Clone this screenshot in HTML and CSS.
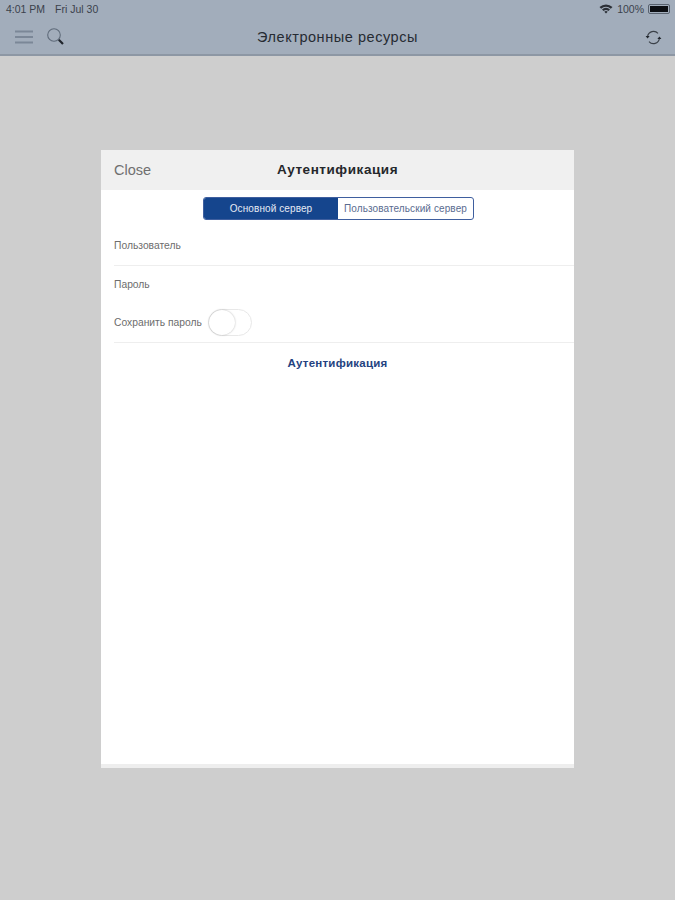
FILE: index.html
```html
<!DOCTYPE html>
<html lang="ru">
<head>
    <meta charset="UTF-8">
    <meta name="viewport" content="width=device-width, initial-scale=1.0">
    <title>Электронные ресурсы</title>
    <link rel="stylesheet" href="styles.css">
</head>
<body>
    <header class="topbar">
        <div class="status">
            <div class="status-left">
                <span>4:01 PM</span>
                <span>Fri Jul 30</span>
            </div>
            <div class="status-right">
                <svg class="wifi" width="14" height="10" viewBox="0 0 14 10">
                    <path d="M0.5 3 A9.5 9.5 0 0 1 13.5 3 L11.8 4.7 A7 7 0 0 0 2.2 4.7 Z" fill="#2b2f36"/>
                    <path d="M3 5.4 A6 6 0 0 1 11 5.4 L9.4 7 A3.8 3.8 0 0 0 4.6 7 Z" fill="#2b2f36"/>
                    <path d="M5.3 7.7 A2.6 2.6 0 0 1 8.7 7.7 L7 9.6 Z" fill="#2b2f36"/>
                </svg>
                <span>100%</span>
                <span class="battery"><span class="battery-fill"></span></span>
            </div>
        </div>
        <div class="navbar">
            <div class="nav-left">
                <svg width="20" height="16" viewBox="0 0 20 16">
                    <path d="M1 2.5H19M1 8H19M1 13.5H19" stroke="#7b8797" stroke-width="2" fill="none"/>
                </svg>
                <svg width="20" height="20" viewBox="0 0 20 20">
                    <circle cx="8" cy="8" r="6.3" stroke="#5f6b7a" stroke-width="1.1" fill="none"/>
                    <path d="M12.8 12.8L17 17" stroke="#20252c" stroke-width="2.2" fill="none"/>
                </svg>
            </div>
            <div class="nav-title">Электронные ресурсы</div>
            <svg class="refresh" width="17" height="15" viewBox="0 0 17 15">
                <path d="M2.6 6.4A6 6 0 0 1 13 3.4" stroke="#3a4048" stroke-width="1.1" fill="none"/>
                <path d="M14.4 8.6A6 6 0 0 1 4 11.6" stroke="#3a4048" stroke-width="1.1" fill="none"/>
                <path d="M0.6 6L4.6 6L2.6 8.6Z" fill="#20252c"/>
                <path d="M12.4 9L16.4 9L14.4 6.4Z" fill="#20252c"/>
            </svg>
        </div>
    </header>

    <main class="overlay">
        <section class="modal">
            <div class="modal-head">
                <span class="close">Close</span>
                <span class="modal-title">Аутентификация</span>
            </div>
            <div class="modal-body">
                <div class="segments">
                    <div class="segment active">Основной сервер</div>
                    <div class="segment">Пользовательский сервер</div>
                </div>
                <div class="field">Пользователь</div>
                <div class="field">Пароль</div>
                <div class="field save-row">
                    <span>Сохранить пароль</span>
                    <span class="switch"><span class="knob"></span></span>
                </div>
                <div class="submit">Аутентификация</div>
            </div>
            <div class="modal-foot"></div>
        </section>
    </main>
</body>
</html>
```

FILE: styles.css
```css
* {
    box-sizing: border-box;
}

body {
    margin: 0;
    height: 900px;
    overflow: hidden;
    display: flex;
    flex-direction: column;
    font-family: 'Liberation Sans', Arial, sans-serif;
    background: #cecece;
}

.topbar {
    height: 56px;
    flex-shrink: 0;
    background: #a2adbb;
    border-bottom: 2px solid #8d97a4;
}

.status {
    height: 20px;
    padding: 0 5px 2px 6px;
    display: flex;
    justify-content: space-between;
    align-items: center;
    font-size: 10.5px;
    color: #3b424c;
}

.status-left {
    display: flex;
    gap: 10px;
}

.status-right {
    display: flex;
    align-items: center;
    gap: 4px;
}

.battery {
    width: 22px;
    height: 10px;
    padding: 1px;
    border: 1px solid #59626e;
    border-radius: 2px;
    display: block;
}

.battery-fill {
    display: block;
    height: 100%;
    background: #0c0e12;
}

.navbar {
    height: 34px;
    padding: 0 13px 0 14px;
    display: flex;
    align-items: center;
    justify-content: space-between;
    position: relative;
}

.nav-left {
    display: flex;
    align-items: center;
    gap: 12px;
}

.nav-title {
    position: absolute;
    left: 0;
    right: 0;
    text-align: center;
    font-size: 14.5px;
    letter-spacing: 0.55px;
    color: #262b32;
    pointer-events: none;
}

.overlay {
    flex: 1;
    padding: 94px 101px 132px 101px;
}

.modal {
    height: 618px;
    display: flex;
    flex-direction: column;
    background: #fff;
}

.modal-head {
    height: 40px;
    padding-bottom: 1px;
    flex-shrink: 0;
    background: #f0f0f0;
    position: relative;
    display: flex;
    align-items: center;
    justify-content: center;
}

.close {
    position: absolute;
    left: 13px;
    font-size: 14.5px;
    color: #6f6f6f;
}

.modal-title {
    font-size: 13.5px;
    font-weight: bold;
    letter-spacing: 0.55px;
    color: #25272b;
}

.modal-body {
    flex: 1;
    padding-top: 7px;
}

.segments {
    width: 271px;
    height: 23px;
    margin: 0 0 7px 102px;
    display: flex;
    border: 1px solid #3f5f9f;
    border-radius: 3px;
    overflow: hidden;
}

.segment {
    flex: 1;
    display: flex;
    align-items: center;
    justify-content: center;
    font-size: 10px;
    letter-spacing: 0.1px;
    color: #5a6b8f;
    white-space: nowrap;
}

.segment.active {
    flex: 0 0 134px;
    background: #15458d;
    color: #e6ebf4;
}

.field {
    height: 38.5px;
    margin-left: 13px;
    display: flex;
    align-items: center;
    font-size: 10.3px;
    color: #6d6d6d;
    border-bottom: 1px solid #eeeeee;
}

.save-row {
    gap: 6px;
}

.field:nth-of-type(3) {
    border-bottom: none;
}

.switch {
    width: 44px;
    height: 27px;
    border: 1px solid #e8e8e8;
    border-radius: 14px;
    background: #fff;
    display: block;
}

.knob {
    display: block;
    width: 26px;
    height: 25px;
    border-radius: 50%;
    background: #fff;
    box-shadow: 0 0 2px rgba(0, 0, 0, 0.3);
}

.submit {
    padding-top: 14px;
    text-align: center;
    font-size: 11.5px;
    font-weight: bold;
    letter-spacing: 0.25px;
    color: #24427f;
}

.modal-foot {
    height: 4px;
    flex-shrink: 0;
    background: #eeeeee;
}
```
